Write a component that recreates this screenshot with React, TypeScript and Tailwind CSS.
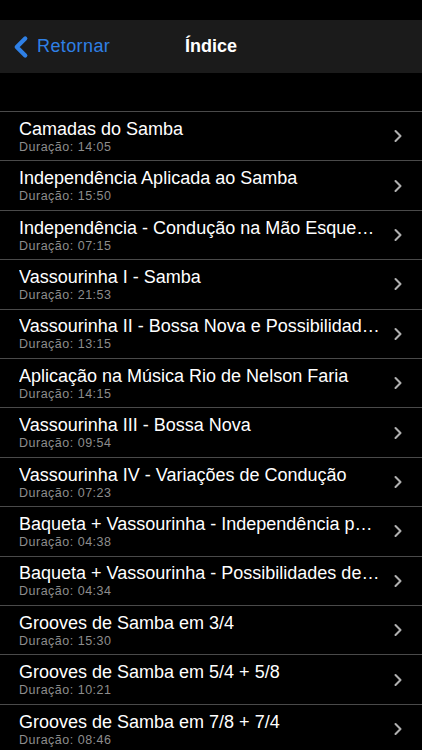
import { ChevronLeft, ChevronRight } from 'lucide-react'

const lessons = [
  { title: 'Camadas do Samba', duration: '14:05' },
  { title: 'Independência Aplicada ao Samba', duration: '15:50' },
  { title: 'Independência - Condução na Mão Esquerda', duration: '07:15' },
  { title: 'Vassourinha I - Samba', duration: '21:53' },
  { title: 'Vassourinha II - Bossa Nova e Possibilidades', duration: '13:15' },
  { title: 'Aplicação na Música Rio de Nelson Faria', duration: '14:15' },
  { title: 'Vassourinha III - Bossa Nova', duration: '09:54' },
  { title: 'Vassourinha IV - Variações de Condução', duration: '07:23' },
  { title: 'Baqueta + Vassourinha - Independência passo a passo', duration: '04:38' },
  { title: 'Baqueta + Vassourinha - Possibilidades de Groove', duration: '04:34' },
  { title: 'Grooves de Samba em 3/4', duration: '15:30' },
  { title: 'Grooves de Samba em 5/4 + 5/8', duration: '10:21' },
  { title: 'Grooves de Samba em 7/8 + 7/4', duration: '08:46' },
]

export default function App() {
  return (
    <div className="w-[422px] h-[750px] overflow-hidden bg-black font-['Liberation_Sans',Arial,sans-serif]">
      {/* status bar */}
      <div className="h-[20px] bg-black" />

      {/* nav bar */}
      <div className="relative h-[53px] bg-[#1b1b1b] flex items-center">
        <div className="flex items-center pl-[4px] text-[#2f80e6]">
          <ChevronLeft size={34} strokeWidth={3} className="-mr-[1px]" />
          <span className="text-[18px] tracking-[0.4px]">Retornar</span>
        </div>
        <span className="absolute left-0 right-0 text-center text-white text-[18px] font-bold pointer-events-none">
          Índice
        </span>
      </div>

      {/* gap */}
      <div className="h-[38px]" />

      <ul>
        {lessons.map((lesson) => (
          <li
            key={lesson.title}
            className="h-[49.42px] border-t border-[#4a4a4a] flex items-center pl-[19px] pr-[14px]"
          >
            <div className="flex-1 min-w-0 pr-[8px]">
              <p className="text-white text-[18px] leading-[22px] truncate">
                {lesson.title}
              </p>
              <p className="text-[#8d8d8d] text-[12.5px] leading-[15px] tracking-[0.5px]">
                Duração: {lesson.duration}
              </p>
            </div>
            <ChevronRight size={20} strokeWidth={2.5} className="text-[#b0b0b0]" />
          </li>
        ))}
      </ul>
    </div>
  )
}
